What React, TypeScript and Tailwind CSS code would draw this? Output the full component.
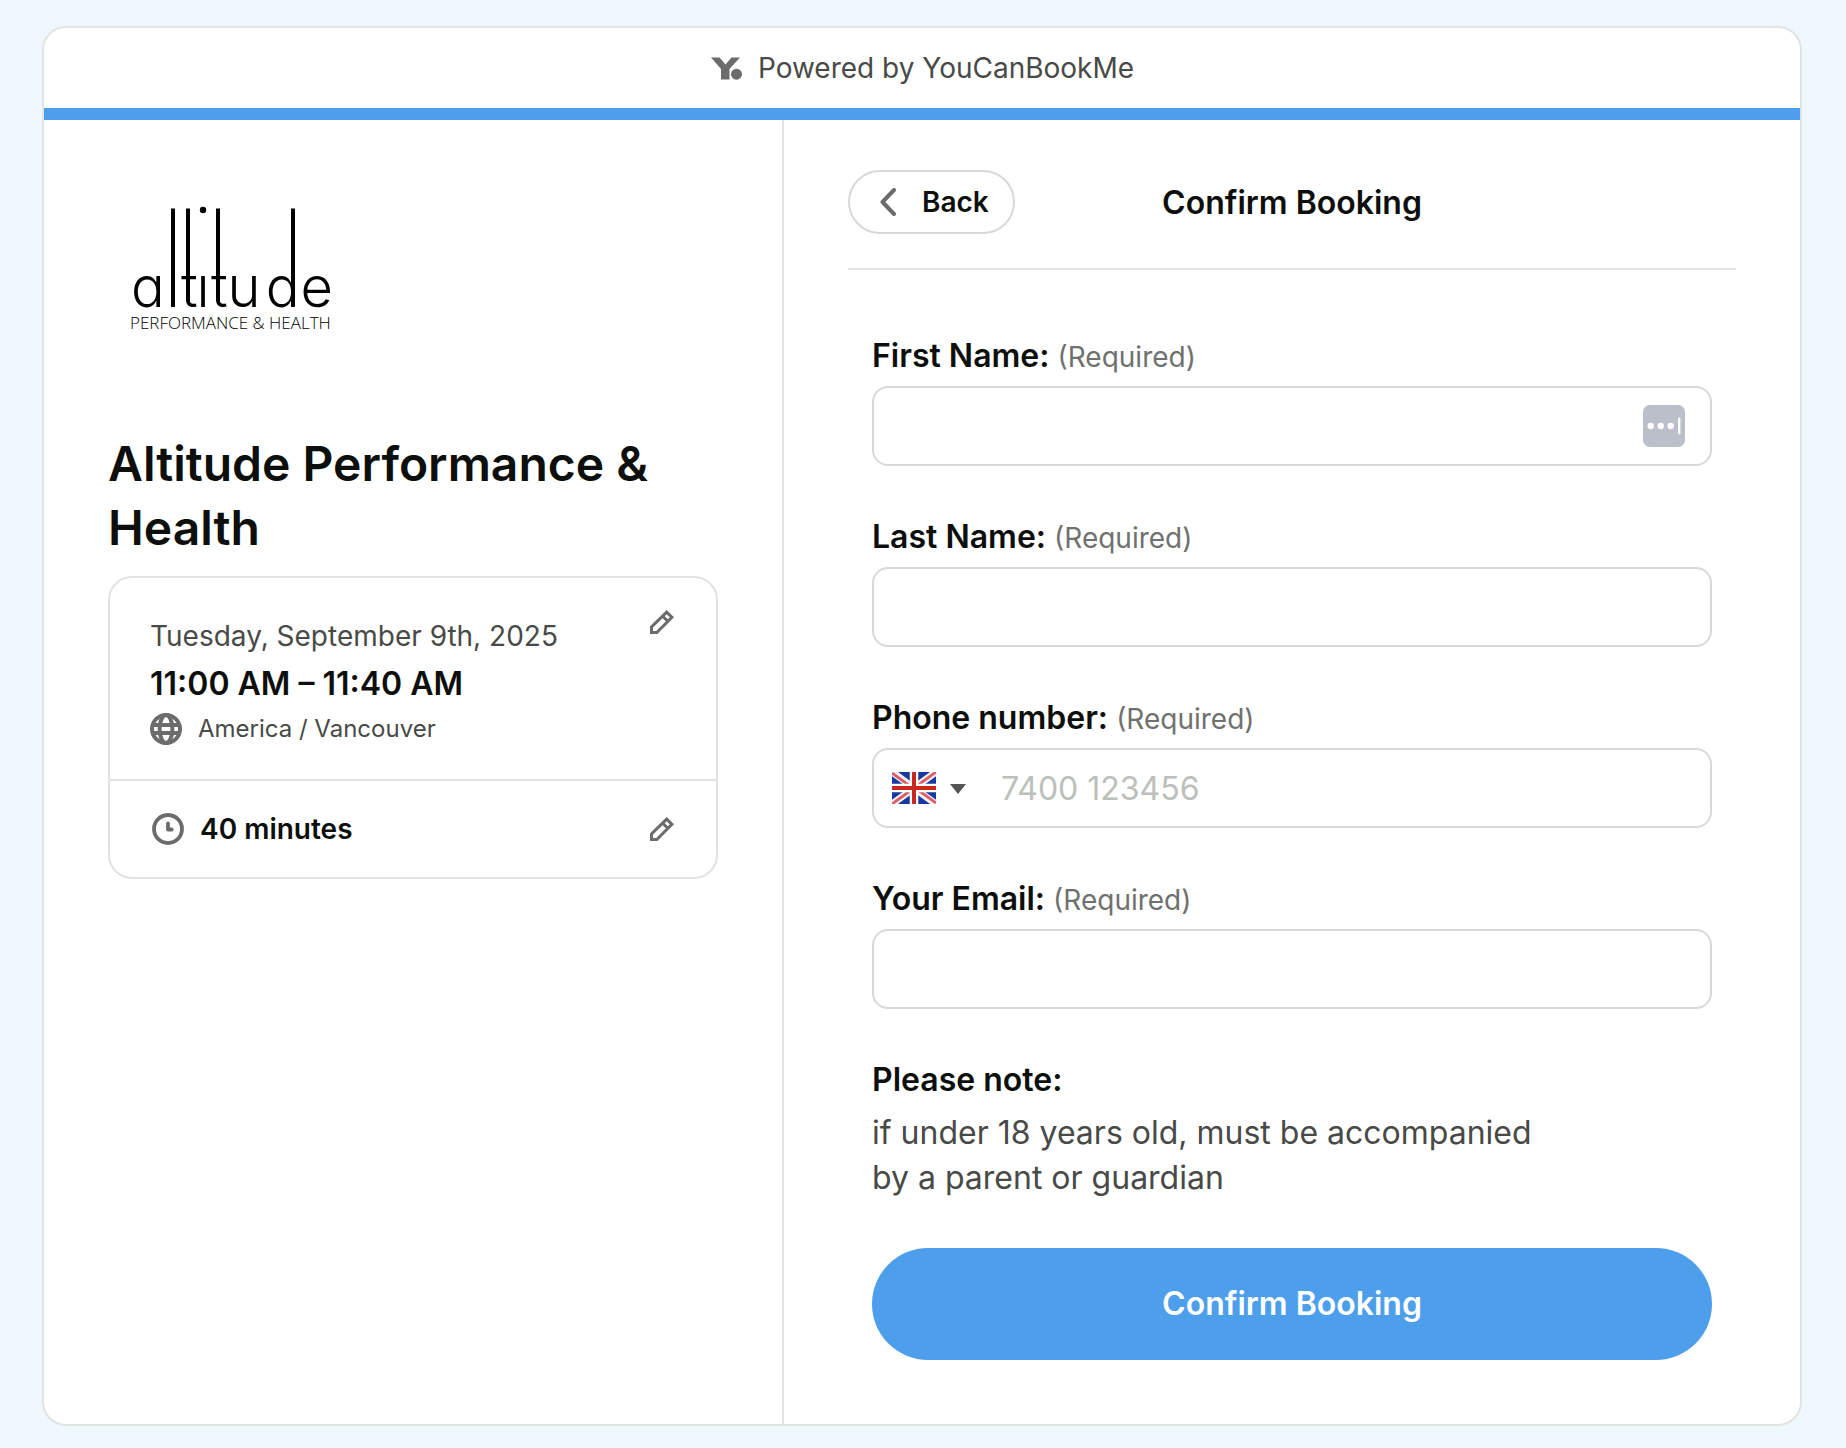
import React, { useState } from 'react';

const fields = [
  { id: 'firstName', label: 'First Name:', type: 'text' },
  { id: 'lastName', label: 'Last Name:', type: 'text' },
  { id: 'phone', label: 'Phone number:', type: 'tel' },
  { id: 'email', label: 'Your Email:', type: 'email' },
];

function BrandMark() {
  return (
    <svg className="w-8 h-6" viewBox="0 0 32 24" fill="#6b6d6a" aria-hidden="true">
      <path d="M1 1.500h8.500l6 7 6-7H30L19.500 13v10.500H11V13z" />
      <circle cx="26.500" cy="18.200" r="5.500" />
    </svg>
  );
}

// wordmark with stems that run far above the letters
function AltitudeLogo() {
  return (
    <svg className="w-[248px] h-[160px]" viewBox="108 184 248 160" role="img" aria-label="Altitude Performance & Health">
      <text
        x="131 166.500 181 196.500 211 227.500 265.700 300.500"
        y="306.500"
        fontSize="56"
        fontWeight="300"
        style={{ fontFeatureSettings: '"cv11"' }}
      >
        altıtude
      </text>
      <path stroke="#000" strokeWidth="4" d="M173 208.500V306.500M188 208.500V301M218 208.500V301M293 208.500V306.500" />
      <circle cx="203" cy="210" r="3.200" />
      <text x="130" y="329" fontFamily="Open Sans" fontSize="17" fontWeight="300">PERFORMANCE &amp; HEALTH</text>
    </svg>
  );
}

function PencilIcon() {
  return (
    <svg className="w-6 h-6" viewBox="0 0 24 24" fill="none" stroke="#6b6d6a" strokeWidth="3" aria-hidden="true">
      <path d="M1.500 22.500V17L16.700 2.100L21.900 7.300L6.800 22.500zM12.500 6L18 11.500" />
    </svg>
  );
}

function GlobeIcon() {
  return (
    <svg className="w-8 h-8" viewBox="0 0 32 32" fill="none" stroke="#6b6d6a" strokeWidth="4" aria-hidden="true">
      <circle cx="16" cy="16" r="14" />
      <ellipse cx="16" cy="16" rx="6.400" ry="14" />
      <path d="M3 12h26M3 20h26" />
    </svg>
  );
}

function ClockIcon() {
  return (
    <svg className="w-8 h-8" viewBox="0 0 32 32" fill="none" stroke="#6b6d6a" strokeWidth="3.800" aria-hidden="true">
      <circle cx="16" cy="16" r="14" />
      <path d="M16 10.500v6h3.700" strokeLinecap="round" strokeLinejoin="round" />
    </svg>
  );
}

function FlagGB() {
  return (
    <svg className="w-11 h-8" viewBox="0 0 44 32" aria-hidden="true">
      <path fill="#173a9c" d="M0 0h44v32H0z" />
      <path stroke="#f3f1f6" strokeWidth="7" d="M0 0l44 32M44 0L0 32" />
      <path stroke="#dc5f63" strokeWidth="2.800" d="M0 1l20 14.500M44 31L24 16.500M44 0L24 14.500M0 32l20-14.500" />
      <path stroke="#fff" strokeWidth="8.500" d="M22 0v32M0 16h44" />
      <path stroke="#c8281e" strokeWidth="4" d="M22 0v32M0 16h44" />
    </svg>
  );
}

function PasswordManagerIcon() {
  return (
    <svg className="w-[42px] h-[42px]" viewBox="0 0 42 42" fill="#fff" aria-hidden="true">
      <rect width="42" height="42" rx="7" fill="#bbbfca" />
      <circle cx="7.700" cy="21" r="3.200" />
      <circle cx="17.700" cy="21" r="3.200" />
      <circle cx="27.700" cy="21" r="3.200" />
      <rect x="35" y="12.500" width="2.400" height="17" rx="1" />
    </svg>
  );
}

export default function App() {
  const [values, setValues] = useState<Record<string, string>>({});

  return (
    <div className="min-h-screen bg-[#eff7ff] pt-[26px] pb-[22px] pl-[42px] pr-11 font-['Inter',sans-serif] text-[#0d0f0c]">
      <main className="bg-white border-2 border-[#e2e4e0] rounded-3xl overflow-hidden">
        <header className="h-20 flex items-center justify-center gap-4 text-[28px] text-[#484a47]">
          <BrandMark />
          <span>Powered by YouCanBookMe</span>
        </header>
        <div className="h-3 bg-[#4d9eeb]" />

        <div className="grid grid-cols-[185fr_254fr]">
          <section className="border-r-2 border-[#e2e2e2] px-16 pt-16">
            <AltitudeLogo />
            <h1 className="mt-[88px] text-[48px] leading-[64px] font-semibold">Altitude Performance &amp; Health</h1>

            <div className="mt-4 border-2 border-[#e2e2e2] rounded-3xl">
              <div className="flex items-start justify-between pl-10 pr-[42px] pt-8 pb-[30px] border-b-2 border-[#e2e2e2]">
                <div>
                  <p className="pt-1 text-[28px] leading-[45px] text-[#484a47]">Tuesday, September 9th, 2025</p>
                  <p className="text-[32px] leading-[50px] font-semibold">11:00 AM – 11:40 AM</p>
                  <p className="flex items-center gap-4 text-[24px] leading-10 text-[#484a47]">
                    <GlobeIcon />
                    America / Vancouver
                  </p>
                </div>
                <button type="button" aria-label="Edit time"><PencilIcon /></button>
              </div>
              <div className="flex items-center justify-between h-24 px-[42px]">
                <p className="flex items-center gap-4 text-[28px] font-semibold">
                  <ClockIcon />
                  40 minutes
                </p>
                <button type="button" aria-label="Edit duration"><PencilIcon /></button>
              </div>
            </div>
          </section>

          <section className="px-16 pt-[50px] pb-16">
            <div className="grid grid-cols-[1fr_auto_1fr] items-center pb-[34px] border-b-2 border-[#e2e2e2]">
              <button
                type="button"
                className="justify-self-start flex items-center gap-[26px] h-16 pl-[30px] pr-6 border-2 border-[#d6dad5] rounded-full text-[28px] font-semibold"
              >
                <svg className="w-4 h-7" viewBox="0 0 16 28" fill="none" stroke="#6b6d6a" strokeWidth="4" strokeLinecap="round" strokeLinejoin="round" aria-hidden="true">
                  <path d="M14 2L2.500 14L14 26" />
                </svg>
                Back
              </button>
              <h2 className="text-[32px] leading-[45px] font-semibold">Confirm Booking</h2>
            </div>

            <form className="px-6 pt-[63px]" onSubmit={e => e.preventDefault()}>
              {fields.map(f => (
                <div key={f.id} className="mb-12">
                  <label htmlFor={f.id} className="block mb-2 text-[32px] leading-[45px] font-semibold">
                    {f.label} <span className="text-[28px] leading-none font-normal text-[#6f716e]">(Required)</span>
                  </label>
                  <div className="flex items-center h-20 border-2 border-[#d6dad5] rounded-2xl">
                    {f.id === 'phone' && (
                      <button type="button" aria-label="Country: United Kingdom" className="flex items-center gap-[14px] pl-[18px]">
                        <FlagGB />
                        <svg className="w-4 h-3" viewBox="0 0 16 12" fill="#555" aria-hidden="true">
                          <path d="M0 2h16L8 12z" />
                        </svg>
                      </button>
                    )}
                    <input
                      id={f.id}
                      type={f.type}
                      value={values[f.id] || ''}
                      onChange={e => setValues({ ...values, [f.id]: e.target.value })}
                      placeholder={f.id === 'phone' ? '7400 123456' : undefined}
                      className="flex-1 min-w-0 h-full px-[35px] text-[32px] outline-none placeholder:text-[#bcc0ba]"
                    />
                    {f.id === 'firstName' && (
                      <span className="pr-[25px]"><PasswordManagerIcon /></span>
                    )}
                  </div>
                </div>
              ))}

              <h3 className="mb-2 text-[32px] leading-[45px] font-semibold">Please note:</h3>
              <p className="text-[32px] leading-[45px] text-[#484a47]">
                if under 18 years old, must be accompanied<br />
                by a parent or guardian
              </p>

              <button type="submit" className="mt-12 w-full h-28 rounded-full bg-[#4d9eeb] text-white text-[32px] font-semibold">
                Confirm Booking
              </button>
            </form>
          </section>
        </div>
      </main>
    </div>
  );
}
